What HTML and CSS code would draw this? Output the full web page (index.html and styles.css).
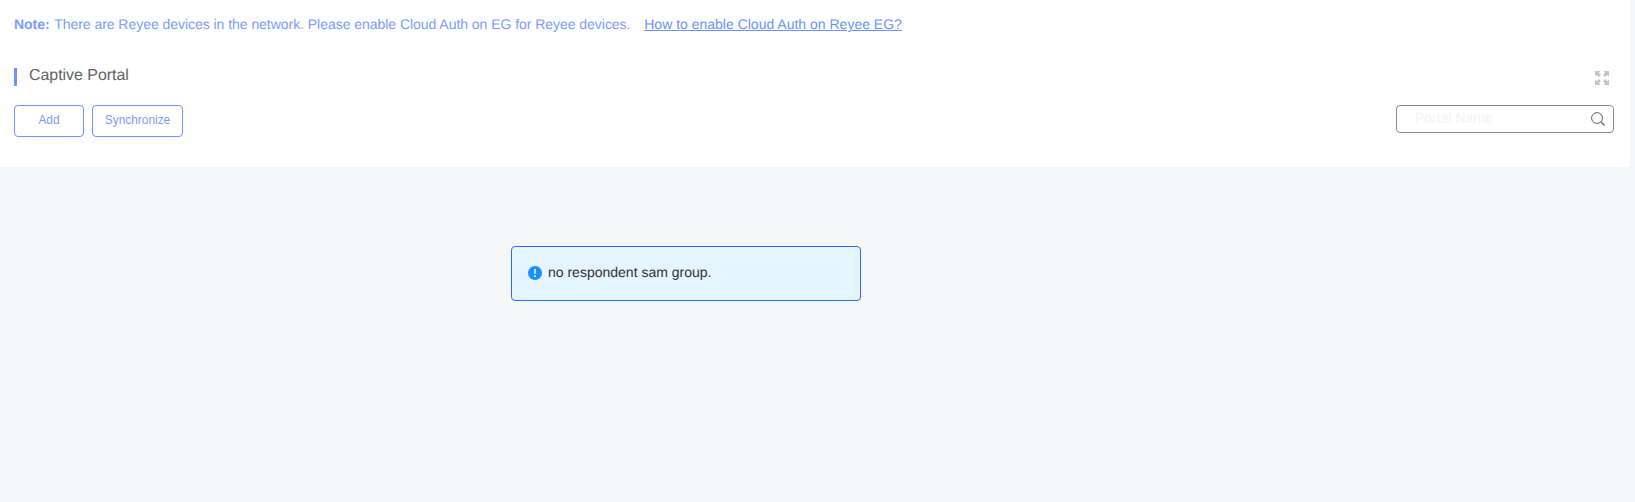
FILE: index.html
```html
<!DOCTYPE html>
<html>
<head>
  <title>Captive Portal</title>
  <link rel="stylesheet" href="styles.css">
</head>
<body>
  <div class="panel">
    <div class="note">
      <b class="note-label">Note:</b> There are Reyee devices in the network. Please enable Cloud Auth on EG for Reyee devices.
      <a class="note-link" href="#">How to enable Cloud Auth on Reyee EG?</a>
    </div>
    <div class="title-row">
      <h2 class="title">Captive Portal</h2>
      <svg class="expand-icon" width="14" height="14" viewBox="0 0 14 14">
        <path d="M0 0h5.500L3.800 1.700 6 3.900 3.900 6 1.700 3.800 0 5.500zM14 0v5.500l-1.700-1.700L10.100 6 8 3.900l2.200-2.200L8.500 0zM0 14V8.500l1.700 1.700L3.900 8 6 10.100l-2.200 2.200L5.500 14zM14 14H8.500l1.700-1.700L8 10.100 10.100 8l2.200 2.200L14 8.500z" fill="#c0c4cc"/>
      </svg>
    </div>
    <div class="toolbar">
      <button class="btn btn-add">Add</button>
      <button class="btn btn-sync">Synchronize</button>
      <div class="search">
        <input class="search-input" type="text" placeholder="Portal Name">
        <svg class="search-icon" width="14" height="14" viewBox="0 0 14 14">
          <circle cx="6" cy="6" r="5.400" fill="none" stroke="#606266" stroke-width="1"/>
          <path d="M10 10l3.500 3.500" stroke="#606266" stroke-width="1.200"/>
        </svg>
      </div>
    </div>
  </div>
  <div class="content">
    <div class="message">
      <svg class="message-icon" width="14" height="14" viewBox="0 0 14 14">
        <circle cx="7" cy="7" r="7" fill="#1890ff"/>
        <path d="M6.200 3h1.600l-.2 5H6.400zM6.200 9.200h1.600v1.700H6.200z" fill="#fff"/>
      </svg>
      <span class="message-text">no respondent sam group.</span>
    </div>
  </div>
</body>
</html>
```

FILE: styles.css
```css
/* CSS styling for the page */
html, body {
  height: 100%;
}
body {
  margin: 0;
  font-family: "Liberation Sans", Arial, sans-serif;
  text-rendering: geometricPrecision;
  background-color: #f5f7f9;
  overflow: hidden;
}
.panel {
  width: 1630px;
  height: 167px;
  box-sizing: border-box;
  padding: 16px 16px 0 14px;
  background-color: #fff;
}
.note {
  font-size: 14px;
  line-height: 16px;
  letter-spacing: -0.04px;
  color: #7a9dff;
}
.note-label {
  margin-right: 1px;
}
.note-link {
  margin-left: 10px;
  letter-spacing: 0;
  color: #6b93f5;
}
.title-row {
  display: flex;
  justify-content: space-between;
  align-items: flex-start;
  margin-top: 36px;
}
.title {
  margin: 0;
  padding-left: 12px;
  padding-bottom: 2px;
  border-left: 3px solid #6e94ff;
  font-size: 15.900px;
  font-weight: normal;
  line-height: 16px;
  color: #606266;
}
.expand-icon {
  margin-top: 3px;
  margin-right: 5px;
}
.toolbar {
  display: flex;
  align-items: flex-start;
  gap: 8px;
  margin-top: 19px;
}
.btn {
  height: 32px;
  padding: 0 0 2px;
  background-color: #fff;
  border: 1px solid #6e94ff;
  border-radius: 4px;
  font-family: inherit;
  font-size: 11.900px;
  color: #7a9dff;
}
.btn-add {
  width: 70px;
}
.btn-sync {
  width: 91px;
}
.search {
  position: relative;
  width: 218px;
  margin-left: auto;
}
.search-input {
  display: block;
  width: 100%;
  height: 28px;
  box-sizing: border-box;
  padding: 0 34px 2px 18px;
  border: 1px solid #8c8c8c;
  border-radius: 4px;
  font-family: inherit;
  font-size: 14px;
  outline: none;
}
.search-input::placeholder {
  color: #f4f4f4;
  opacity: 1;
}
.search-icon {
  position: absolute;
  top: 7px;
  right: 9px;
}
.content {
  padding-top: 79px;
  padding-left: 511px;
}
.message {
  display: flex;
  align-items: center;
  gap: 6px;
  width: 350px;
  height: 55px;
  box-sizing: border-box;
  padding-left: 16px;
  padding-bottom: 2px;
  background-color: #e6f4ff;
  border: 1px solid #2e6cf0;
  border-radius: 4px;
  font-size: 14px;
  color: #303133;
}
.message-text {
  padding-bottom: 2px;
}
```
